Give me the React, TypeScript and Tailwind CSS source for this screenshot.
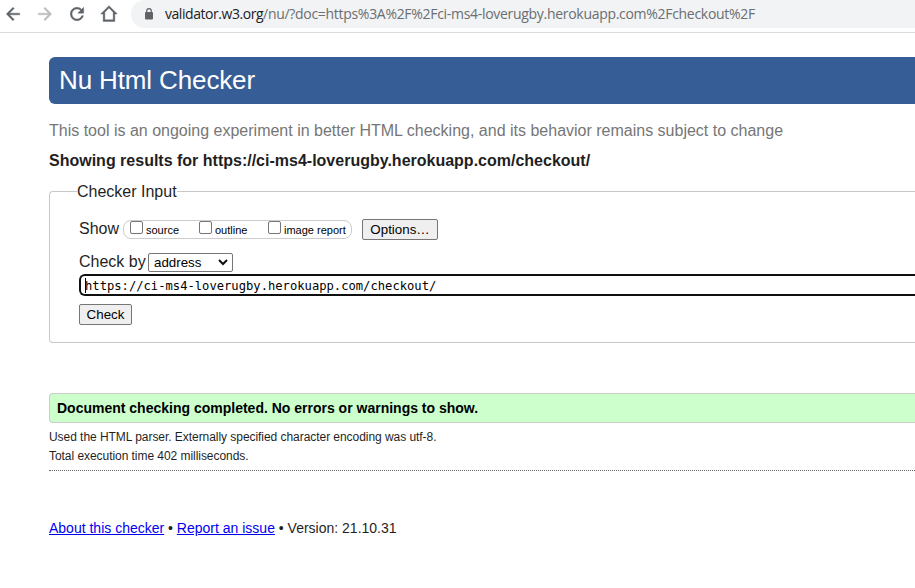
import React from "react";

const arial = "font-['Liberation_Sans',Arial,sans-serif]";

function NavIcon({ d, color }: { d: string; color: string }) {
  return (
    <svg width="20" height="20" viewBox="0 0 24 24" fill={color} stroke={color} strokeWidth="0.5" className="shrink-0">
      <path d={d} />
    </svg>
  );
}

function Toolbar() {
  return (
    <div className="flex h-[33px] items-start border-b border-[#dadce0] bg-white">
      <div className="flex h-7 items-center gap-3 pl-[3px]">
        <NavIcon color="#5f6368" d="M20 11H7.83l5.59-5.59L12 4l-8 8 8 8 1.410-1.410L7.83 13H20v-2z" />
        <NavIcon color="#babcbe" d="M12 4l-1.410 1.410L16.170 11H4v2h12.170l-5.580 5.590L12 20l8-8z" />
        <NavIcon
          color="#5f6368"
          d="M17.65 6.35C16.2 4.9 14.21 4 12 4c-4.42 0-7.99 3.58-7.99 8s3.57 8 7.99 8c3.73 0 6.84-2.55 7.73-6h-2.08c-.82 2.33-3.04 4-5.65 4-3.31 0-6-2.69-6-6s2.69-6 6-6c1.66 0 3.14.69 4.22 1.78L13 11h7V4l-2.35 2.35z"
        />
        <NavIcon color="#5f6368" d="M12 2 2 12h3v9h14v-9h3L12 2zm0 2.900 5 5V19H7V9.900l5-5z" />
      </div>
      <div className="ml-[12px] flex h-7 flex-1 items-center rounded-l-full bg-[#f1f3f4] pl-[13px]">
        <svg width="10" height="12" viewBox="0 0 10 12" className="mr-[11px] shrink-0">
          <rect x="1" y="4" width="8" height="7.500" rx="1" fill="#5f6368" />
          <path d="M2.700 5V3a2.300 2.300 0 0 1 4.600 0v2" fill="none" stroke="#5f6368" strokeWidth="1.200" />
        </svg>
        <span className="whitespace-nowrap font-['Open_Sans',sans-serif] text-[14px] leading-5 tracking-[-0.3px] text-[#6b6e72]">
          <span className="tracking-[-0.450px] text-[#202124]">validator.w3.org</span>
          /nu/?doc=https%3A%2F%2Fci-ms4-loverugby.herokuapp.com%2Fcheckout%2F
        </span>
      </div>
    </div>
  );
}

function Check({ label, className }: { label: string; className: string }) {
  return (
    <label className={`flex ${className}`}>
      <span className="mt-[1px] h-[13px] w-[13px] shrink-0 rounded-[2px] border border-[#767676] bg-white" />
      <span className="ml-[3px] mt-[3px] whitespace-nowrap text-[11px] leading-[14px] text-black">{label}</span>
    </label>
  );
}

export default function App() {
  return (
    <div className={`h-[588px] w-full overflow-hidden bg-white text-[#1f1f1f] ${arial}`}>
      <Toolbar />
      <main className="ml-[49px] pt-6">
        <h1 className="flex h-[47px] items-center rounded-l-[6px] bg-[#365d95] pl-[10px] text-[26px] tracking-[-0.130px] text-white">
          Nu Html Checker
        </h1>
        <p className="mt-[17px] whitespace-nowrap text-[16px] leading-5 text-[#767676]">
          This tool is an ongoing experiment in better HTML checking, and its behavior remains subject to change
        </p>
        <h2 className="mt-[10px] whitespace-nowrap text-[16px] font-bold leading-5">
          Showing results for https://ci-ms4-loverugby.herokuapp.com/checkout/
        </h2>
        <fieldset className="mt-[10px] h-[162px] rounded-l-[4px] border border-r-0 border-[#c8c8c8] pl-[29px]">
          <legend className="-ml-[2px] h-5 pt-px text-[16px] leading-5">Checker Input</legend>
          <div className="mt-[17px] flex h-[22px] items-center">
            <span className="w-[44px] text-[16px]">Show</span>
            <div className="flex h-[19px] w-[229px] items-start rounded-[8px] border border-[#ccc]">
              <Check label="source" className="ml-[6px] w-[69px] -mt-px" />
              <Check label="outline" className="w-[69px] -mt-px" />
              <Check label="image report" className="-mt-px" />
            </div>
            <button className="ml-[10px] h-[21px] w-[76px] rounded-[2px] border border-[#767676] bg-[#efefef] pt-px text-[13.333px] leading-[18px] text-black">
              Options…
            </button>
          </div>
          <div className="mt-[11px] flex h-[22px] items-center">
            <span className="w-[69px] whitespace-nowrap text-[16px]">Check by</span>
            <div className="flex h-[19px] w-[85px] items-center justify-between rounded-[2px] border border-[#767676] pl-[5px] pr-1 text-[13.333px] text-black">
              <span className="pt-px">address</span>
              <svg width="10" height="7" viewBox="0 0 10 7" fill="none" stroke="#111" strokeWidth="2">
                <path d="m1 1 4 4 4-4" />
              </svg>
            </div>
          </div>
          <div className="mt-[1px] flex h-[22px] items-center rounded-l-[6px] border-2 border-r-0 border-[#101010] pl-[4px] font-['DejaVu_Sans_Mono',monospace] text-[12.170px] text-black">
            <span className="h-[15px] w-px bg-black" />
            <span className="-ml-px whitespace-nowrap pt-[2px]">https://ci-ms4-loverugby.herokuapp.com/checkout/</span>
          </div>
          <button className="mt-2 block h-[21px] w-[53px] rounded-[2px] border border-[#767676] bg-[#efefef] text-[13.333px] leading-[18px] text-black">
            Check
          </button>
        </fieldset>
        <p className="mt-[50px] flex h-[30px] items-center rounded-l-[4px] border border-r-0 border-[#ccc] bg-[#ccffcc] pl-[7px] text-[14px] font-bold text-black">
          Document checking completed. No errors or warnings to show.
        </p>
        <div className="h-[48px] border-b border-dotted border-[#666] pt-[5px] text-[12px] leading-[19px] tracking-[-0.050px]">
          <p>Used the HTML parser. Externally specified character encoding was utf-8.</p>
          <p>Total execution time 402 milliseconds.</p>
        </div>
        <p className="mt-[47px] text-[14px] leading-5">
          <a className="text-[#0000ee] underline">About this checker</a> •{" "}
          <a className="text-[#0000ee] underline">Report an issue</a> • Version: 21.10.31
        </p>
      </main>
    </div>
  );
}
